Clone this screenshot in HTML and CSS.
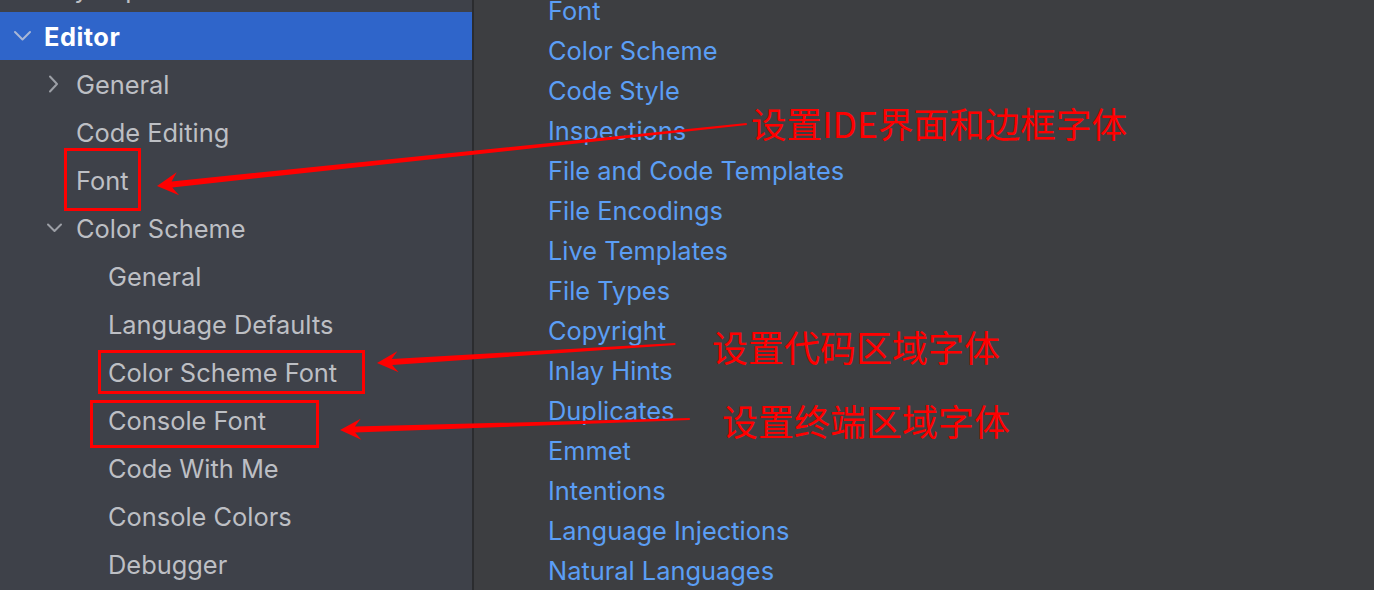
FILE: index.html
```html
<!DOCTYPE html>
<html lang="zh">
<head>
<meta charset="utf-8">
<title>Settings - Editor</title>
<link rel="stylesheet" href="styles.css">
</head>
<body>
<div class="app">
  <nav class="tree">
    <ul class="tree-list">
      <li class="row lvl0"><span class="slot"></span><span class="label">Keymap</span></li>
      <li class="row lvl0 selected"><span class="slot"><svg class="chev" viewBox="0 0 20 20"><path d="M3 6 L10.5 13.5 L18 6"/></svg></span><span class="label">Editor</span></li>
      <li class="row lvl1"><span class="slot"><svg class="chev" viewBox="0 0 20 20"><path d="M6 2.5 L13 10 L6 17.5"/></svg></span><span class="label">General</span></li>
      <li class="row lvl1"><span class="slot"></span><span class="label">Code Editing</span></li>
      <li class="row lvl1"><span class="slot"></span><span class="label">Font</span></li>
      <li class="row lvl1"><span class="slot"><svg class="chev" viewBox="0 0 20 20"><path d="M4 6.5 L10.5 13 L17 6.5"/></svg></span><span class="label">Color Scheme</span></li>
      <li class="row lvl2"><span class="slot"></span><span class="label">General</span></li>
      <li class="row lvl2"><span class="slot"></span><span class="label">Language Defaults</span></li>
      <li class="row lvl2"><span class="slot"></span><span class="label">Color Scheme Font</span></li>
      <li class="row lvl2"><span class="slot"></span><span class="label">Console Font</span></li>
      <li class="row lvl2"><span class="slot"></span><span class="label">Code With Me</span></li>
      <li class="row lvl2"><span class="slot"></span><span class="label">Console Colors</span></li>
      <li class="row lvl2"><span class="slot"></span><span class="label">Debugger</span></li>
    </ul>
  </nav>
  <div class="divider"></div>
  <main class="content">
    <ul class="links">
      <li><a>Font</a></li>
      <li><a>Color Scheme</a></li>
      <li><a>Code Style</a></li>
      <li><a>Inspections</a></li>
      <li><a>File and Code Templates</a></li>
      <li><a>File Encodings</a></li>
      <li><a>Live Templates</a></li>
      <li><a>File Types</a></li>
      <li><a>Copyright</a></li>
      <li><a>Inlay Hints</a></li>
      <li><a>Duplicates</a></li>
      <li><a>Emmet</a></li>
      <li><a>Intentions</a></li>
      <li><a>Language Injections</a></li>
      <li><a>Natural Languages</a></li>
    </ul>
  </main>
</div>

<div class="annot">
  <svg class="marks" width="1374" height="590" viewBox="0 0 1374 590">
    <g class="box">
      <rect x="65.5" y="149.5" width="74" height="60"/>
      <rect x="99.5" y="351.5" width="264" height="41"/>
      <rect x="91.5" y="401.5" width="226" height="45"/>
    </g>
    <g class="arrow">
      <polygon transform="translate(157 186) rotate(174)" points="-593,-1 -15,-3 -21,-11.5 0,0 -21,11.5 -15,3 -593,1"/>
      <polygon transform="translate(377 363) rotate(176.35)" points="-299,-1 -15,-3 -21,-10.5 0,0 -21,10.5 -15,3 -299,1"/>
      <polygon transform="translate(340 430) rotate(178.2)" points="-350,-1 -15,-3 -21,-10.5 0,0 -21,10.5 -15,3 -350,1"/>
    </g>
  </svg>
  <span class="note note1">设置IDE界面和边框字体</span>
  <span class="note note2">设置代码区域字体</span>
  <span class="note note3">设置终端区域字体</span>
</div>
</body>
</html>
```

FILE: styles.css
```css
* { box-sizing: border-box; }
html, body {
  margin: 0;
  padding: 0;
  width: 1374px;
  height: 590px;
  overflow: hidden;
  background: #3d3e41;
  font-family: "Inter", "Noto Sans", sans-serif;
}
body { position: relative; }

.app {
  display: flex;
  width: 1374px;
  height: 590px;
}

.tree {
  width: 472px;
  flex: none;
  background: #3e4149;
  overflow: hidden;
}
.tree-list {
  list-style: none;
  margin: -36px 0 0 0;
  padding: 0;
}
.row {
  display: flex;
  align-items: center;
  height: 48px;
  color: #bdbfc4;
  font-size: 25.4px;
  white-space: nowrap;
}
.row.lvl0 { padding-left: 12px; }
.row.lvl1 { padding-left: 44px; }
.row.lvl2 { padding-left: 76px; }
.slot {
  width: 32px;
  height: 20px;
  flex: none;
  display: flex;
  align-items: center;
}
.chev {
  width: 20px;
  height: 20px;
  fill: none;
  stroke: #9c9fa6;
  stroke-width: 2;
  stroke-linecap: round;
  stroke-linejoin: round;
}
.row.selected {
  background: #2f65ca;
  color: #ffffff;
  font-weight: 700;
  letter-spacing: 0.5px;
}
.row.selected .chev { stroke: #a9b7d6; }
.label {
  line-height: 48px;
  padding-top: 1px;
}

.divider {
  width: 2px;
  flex: none;
  background: #2b2c2f;
}

.content {
  flex: 1;
  background: #3d3e41;
  overflow: hidden;
}
.links {
  list-style: none;
  margin: -10px 0 0 0;
  padding: 0 0 0 74px;
}
.links li {
  height: 40px;
  display: flex;
  align-items: center;
  font-size: 25.4px;
  white-space: nowrap;
}
.links a {
  color: #5b9ef5;
  text-decoration: none;
}

.annot {
  position: absolute;
  inset: 0;
  pointer-events: none;
}
.marks {
  position: absolute;
  left: 0;
  top: 0;
}
.box rect {
  fill: none;
  stroke: #ff0000;
  stroke-width: 3;
}
.arrow polygon {
  fill: #ff0000;
}
.note {
  position: absolute;
  color: #ff0000;
  font-family: "Noto Sans CJK SC", "Noto Sans", sans-serif;
  line-height: 1;
  white-space: nowrap;
}
.note1 { left: 751px; top: 105px; font-size: 35.6px; }
.note2 { left: 712px; top: 328px; font-size: 36px; }
.note3 { left: 722px; top: 402px; font-size: 36px; }
```
